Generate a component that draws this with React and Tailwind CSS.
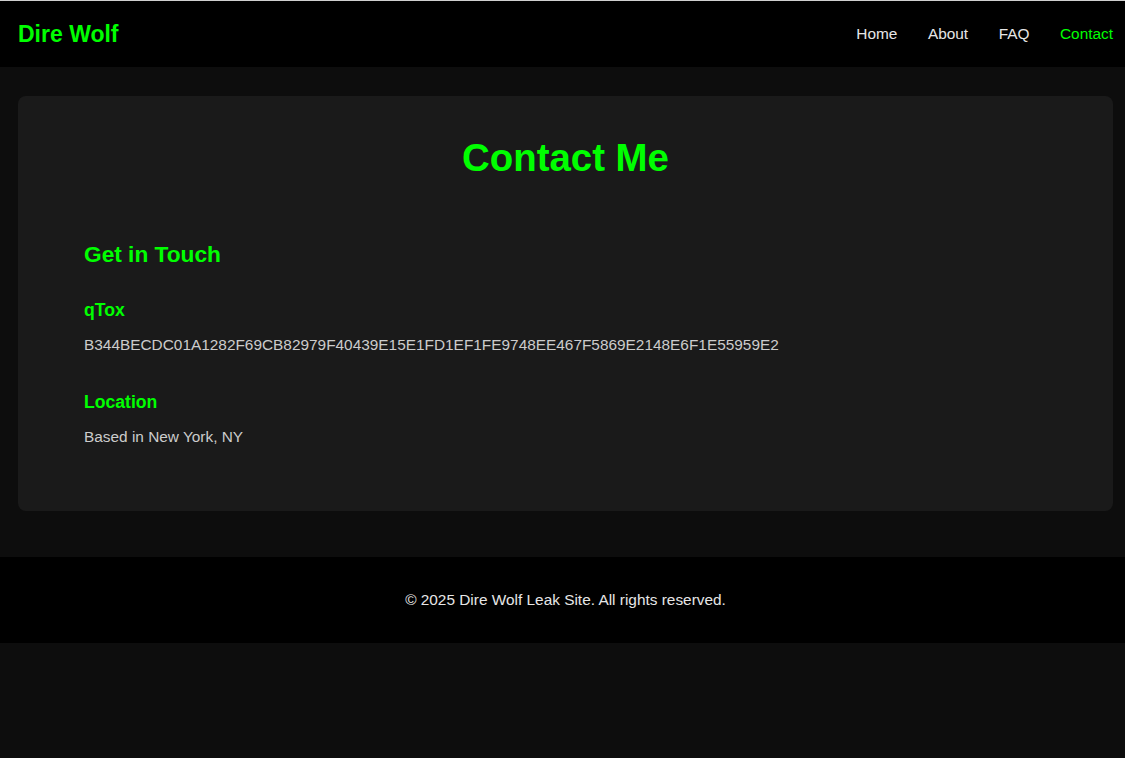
import React from 'react';

const navLinks = [
  { label: 'Home', active: false },
  { label: 'About', active: false },
  { label: 'FAQ', active: false },
  { label: 'Contact', active: true },
];

function Header() {
  return (
    <header className="flex h-[67px] items-center justify-between border-t border-[#cfcfcf] bg-black pl-[18px] pr-[12px]">
      <div className="text-[23px] font-bold leading-none text-[#00ff00]">Dire Wolf</div>
      <nav className="flex items-center gap-[30.5px] text-[15.4px]">
        {navLinks.map((link) => (
          <a
            key={link.label}
            href="#"
            className={link.active ? 'text-[#00ff00]' : 'text-[#e6e6e6]'}
          >
            {link.label}
          </a>
        ))}
      </nav>
    </header>
  );
}

export default function App() {
  return (
    <div
      className="min-h-[758px] bg-[#0d0d0d]"
      style={{ fontFamily: '"Liberation Sans", Arial, sans-serif' }}
    >
      <Header />

      <main className="pl-[18px] pr-[12px] pt-[29px]">
        <section className="rounded-[8px] bg-[#1a1a1a] px-[66px] pb-[65px] pt-[39px]">
          <h1 className="text-center text-[38.4px] font-bold leading-[46px] text-[#00ff00]">
            Contact Me
          </h1>

          <h2 className="mt-[60px] text-[22.7px] font-bold leading-[27px] text-[#00ff00]">
            Get in Touch
          </h2>

          <div className="mt-[32px]">
            <h3 className="text-[17.6px] font-bold leading-[21px] text-[#00ff00]">qTox</h3>
            <p className="mt-[14.5px] text-[15.4px] leading-[18px] text-[#cccccc]">
              B344BECDC01A1282F69CB82979F40439E15E1FD1EF1FE9748EE467F5869E2148E6F1E55959E2
            </p>
          </div>

          <div className="mt-[38px]">
            <h3 className="text-[17.6px] font-bold leading-[21px] text-[#00ff00]">Location</h3>
            <p className="mt-[15.5px] text-[15.4px] leading-[18px] text-[#cccccc]">
              Based in New York, NY
            </p>
          </div>
        </section>
      </main>

      <footer className="mt-[46px] flex h-[86px] items-center justify-center bg-black pl-[6px]">
        <p className="text-[15.4px] text-[#e6e6e6]">
          © 2025 Dire Wolf Leak Site. All rights reserved.
        </p>
      </footer>
    </div>
  );
}
